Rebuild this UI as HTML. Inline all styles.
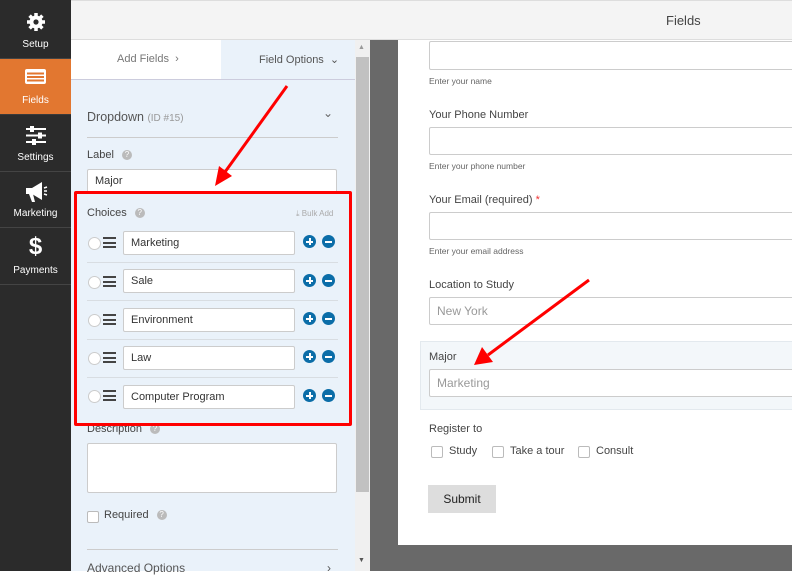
<!DOCTYPE html>
<html><head><style>
*{box-sizing:border-box;margin:0;padding:0}
body{width:792px;height:571px;overflow:hidden;position:relative;background:#fff;font-family:"Liberation Sans",sans-serif;color:#444}
.a{position:absolute}
.sb{left:0;top:0;width:71px;height:571px;background:#2b2b2b}
.si{position:absolute;left:0;width:71px;height:56px;border-bottom:1px solid #444;color:#fff;font-size:10px;text-align:center}
.si span{position:absolute;left:0;right:0;bottom:8px}
.inp{position:absolute;background:#fff;border:1px solid #ccc;border-radius:2px;font-size:11px;color:#333;padding-left:7px;display:flex;align-items:center}
.lbl{position:absolute;font-size:11px;color:#444}
.hint{position:absolute;font-size:8.5px;color:#666}
.q{display:inline-block;width:10px;height:10px;border-radius:50%;background:#bbb;color:#fff;font-size:8px;text-align:center;line-height:10px;margin-left:8px;vertical-align:1px}
.rad{position:absolute;width:13px;height:13px;border-radius:50%;border:1px solid #ccc;background:#fff}
.ham{position:absolute;width:13px;height:11px;border-top:2px solid #444;border-bottom:2px solid #444}
.ham:after{content:"";position:absolute;left:0;right:0;top:2.5px;height:2px;background:#444}
.pm{position:absolute;width:13px;height:13px;border-radius:50%;background:#0b6da8}
.pm:before{content:"";position:absolute;left:3px;top:5.5px;width:7px;height:2px;background:#fff}
.plus:after{content:"";position:absolute;left:5.5px;top:3px;width:2px;height:7px;background:#fff}
.sep{position:absolute;left:87px;width:251px;height:1px;background:#d8dde2}
.cb{position:absolute;width:12px;height:12px;border:1px solid #bbb;border-radius:2px;background:#fff}
</style></head><body>
<div class="a" style="left:71px;top:0;width:721px;height:40px;background:#f4f4f4;border-top:1px solid #ddd;border-bottom:1px solid #ddd"></div>
<div class="a" style="left:666px;top:13px;font-size:13px;color:#444">Fields</div>

<div class="a sb"></div>
<div class="si" style="top:2px;height:57px"><svg class="a" style="left:26px;top:10px" width="20" height="20" viewBox="0 0 20 20"><circle cx="10" cy="10" r="6.5" fill="#fff"/><g stroke="#fff" stroke-width="3.5"><line x1="10" y1="1" x2="10" y2="19"/><line x1="1" y1="10" x2="19" y2="10"/><line x1="3.6" y1="3.6" x2="16.4" y2="16.4"/><line x1="16.4" y1="3.6" x2="3.6" y2="16.4"/></g><circle cx="10" cy="10" r="2.6" fill="#2b2b2b"/></svg><span>Setup</span></div>
<div class="si" style="top:59px;background:#e27730;border-bottom:1px solid #3a3a3a"><div class="a" style="left:25px;top:10px;width:21px;height:15px;border:2px solid #fff;border-radius:2px;background:repeating-linear-gradient(#fff 0 1.5px,#e27730 1.5px 3.5px);"></div><span>Fields</span></div>
<div class="si" style="top:116px"><svg class="a" style="left:25px;top:10px" width="22" height="19"><g stroke="#fff" stroke-width="2"><line x1="1" y1="3" x2="21" y2="3"/><line x1="1" y1="9.5" x2="21" y2="9.5"/><line x1="1" y1="16" x2="21" y2="16"/></g><rect x="5" y="0" width="4" height="6" fill="#fff"/><rect x="13" y="6.5" width="4" height="6" fill="#fff"/><rect x="7" y="13" width="4" height="6" fill="#fff"/></svg><span>Settings</span></div>
<div class="si" style="top:172px"><svg class="a" style="left:24px;top:9px" width="24" height="22"><path d="M2 7h6l10-6v18L8 13H2z" fill="#fff"/><path d="M5 13l3 8h3l-2-8z" fill="#fff"/><path d="M20 7l3 -1M20 10h3M20 13l3 1" stroke="#fff" stroke-width="1.5"/></svg><span>Marketing</span></div>
<div class="si" style="top:229px"><div class="a" style="left:0;right:0;top:4px;font-size:24px;font-weight:bold">$</div><span>Payments</span></div>

<div class="a" style="left:71px;top:40px;width:284px;height:531px;background:#eaf2fa"></div>
<div class="a" style="left:71px;top:40px;width:150px;height:40px;background:#fff"></div>
<div class="a" style="left:71px;top:79px;width:284px;height:1px;background:#ccd"></div>
<div class="a" style="left:117px;top:53px;font-size:11px;color:#777">Add Fields &nbsp;›</div>
<div class="a" style="left:259px;top:53px;font-size:11px;color:#555">Field Options &nbsp;⌄</div>
<div class="a" style="left:87px;top:110px;font-size:12.5px;color:#555">Dropdown <span style="font-size:10px;color:#999">(ID #15)</span></div>
<div class="a" style="left:323px;top:106px;font-size:12px;color:#666">⌄</div>
<div class="sep" style="top:137px;background:#ccc"></div>
<div class="lbl" style="left:87px;top:149px">Label<span class="q">?</span></div>
<div class="inp" style="left:87px;top:169px;width:250px;height:24px">Major</div>
<div class="a" style="left:74px;top:191px;width:278px;height:235px;border:3px solid #f00;border-radius:2px"></div>
<div class="lbl" style="left:87px;top:207px">Choices<span class="q">?</span></div>
<div class="a" style="left:296px;top:209px;font-size:8px;color:#aaa">⤓ Bulk Add</div>

<div class="rad" style="left:88px;top:237px"></div><div class="ham" style="left:103px;top:237px"></div><div class="inp" style="left:123px;top:231px;width:172px;height:24px">Marketing</div><div class="pm plus" style="left:303px;top:235px"></div><div class="pm" style="left:322px;top:235px"></div>
<div class="sep" style="top:262px"></div>
<div class="rad" style="left:88px;top:276px"></div><div class="ham" style="left:103px;top:276px"></div><div class="inp" style="left:123px;top:269px;width:172px;height:24px">Sale</div><div class="pm plus" style="left:303px;top:274px"></div><div class="pm" style="left:322px;top:274px"></div>
<div class="sep" style="top:300px"></div>
<div class="rad" style="left:88px;top:314px"></div><div class="ham" style="left:103px;top:314px"></div><div class="inp" style="left:123px;top:308px;width:172px;height:24px">Environment</div><div class="pm plus" style="left:303px;top:312px"></div><div class="pm" style="left:322px;top:312px"></div>
<div class="sep" style="top:339px"></div>
<div class="rad" style="left:88px;top:352px"></div><div class="ham" style="left:103px;top:352px"></div><div class="inp" style="left:123px;top:346px;width:172px;height:24px">Law</div><div class="pm plus" style="left:303px;top:350px"></div><div class="pm" style="left:322px;top:350px"></div>
<div class="sep" style="top:377px"></div>
<div class="rad" style="left:88px;top:390px"></div><div class="ham" style="left:103px;top:390px"></div><div class="inp" style="left:123px;top:385px;width:172px;height:24px">Computer Program</div><div class="pm plus" style="left:303px;top:389px"></div><div class="pm" style="left:322px;top:389px"></div>

<div class="lbl" style="left:87px;top:423px;clip-path:inset(3px 0 0 0)">Description<span class="q">?</span></div>
<div class="inp" style="left:87px;top:443px;width:250px;height:50px"></div>
<div class="cb" style="left:87px;top:511px"></div>
<div class="lbl" style="left:104px;top:509px">Required<span class="q">?</span></div>
<div class="sep" style="top:549px;background:#ccc"></div>
<div class="a" style="left:87px;top:561px;font-size:12px;color:#555">Advanced Options</div>
<div class="a" style="left:327px;top:561px;font-size:12px;color:#555">›</div>

<div class="a" style="left:355px;top:40px;width:15px;height:531px;background:#f0f0f0"></div>
<div class="a" style="left:356px;top:57px;width:13px;height:435px;background:#c1c1c1"></div>
<div class="a" style="left:358px;top:44px;font-size:7px;color:#999">▲</div>
<div class="a" style="left:358px;top:557px;font-size:7px;color:#555">▼</div>

<div class="a" style="left:370px;top:40px;width:422px;height:531px;background:#696969"></div>
<div class="a" style="left:398px;top:40px;width:394px;height:505px;background:#fff"></div>
<div class="inp" style="left:429px;top:41px;width:380px;height:29px"></div>
<div class="hint" style="left:429px;top:76px">Enter your name</div>
<div class="lbl" style="left:429px;top:109px">Your Phone Number</div>
<div class="inp" style="left:429px;top:127px;width:380px;height:28px"></div>
<div class="hint" style="left:429px;top:161px">Enter your phone number</div>
<div class="lbl" style="left:429px;top:194px">Your Email (required)<span style="color:#e33"> *</span></div>
<div class="inp" style="left:429px;top:212px;width:380px;height:28px"></div>
<div class="hint" style="left:429px;top:246px">Enter your email address</div>
<div class="lbl" style="left:429px;top:279px">Location to Study</div>
<div class="inp" style="left:429px;top:297px;width:380px;height:28px;color:#999;font-size:12px">New York</div>
<div class="a" style="left:420px;top:341px;width:380px;height:69px;background:#f3f7fa;border:1px solid #e3e9ee"></div>
<div class="lbl" style="left:429px;top:351px">Major</div>
<div class="inp" style="left:429px;top:369px;width:380px;height:28px;color:#999;font-size:12px">Marketing</div>
<div class="lbl" style="left:429px;top:423px">Register to</div>
<div class="cb" style="left:431px;top:446px"></div><div class="lbl" style="left:449px;top:445px">Study</div>
<div class="cb" style="left:492px;top:446px"></div><div class="lbl" style="left:510px;top:445px">Take a tour</div>
<div class="cb" style="left:578px;top:446px"></div><div class="lbl" style="left:596px;top:445px">Consult</div>
<div class="a" style="left:428px;top:485px;width:68px;height:28px;background:#ddd;font-size:12px;color:#222;text-align:center;line-height:28px">Submit</div>

<svg class="a" style="left:0;top:0" width="792" height="571"><g stroke="#f00" stroke-width="3" fill="#f00"><line x1="287" y1="86" x2="225" y2="172"/><line x1="589" y1="280" x2="488" y2="355"/></g><polygon points="215,186 219,166 232,176" fill="#f00"/><polygon points="474,365 482,347 493,362" fill="#f00"/></svg>
</body></html>
